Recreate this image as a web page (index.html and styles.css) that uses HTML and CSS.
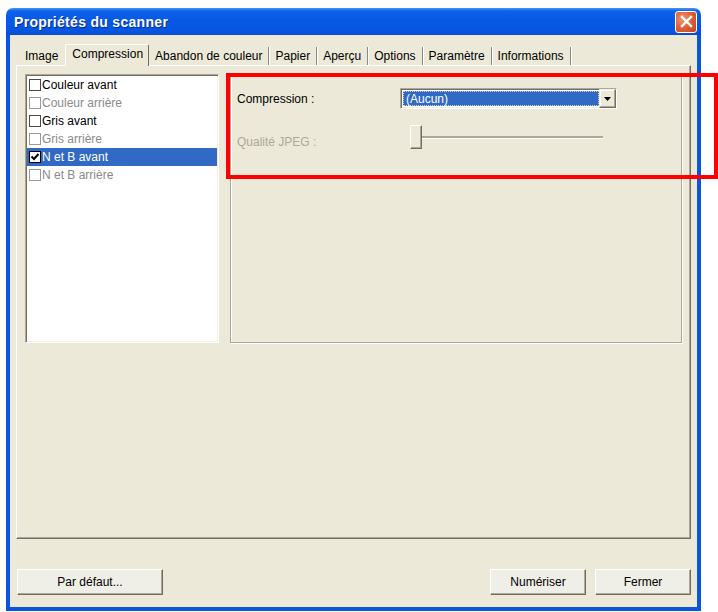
FILE: index.html
```html
<!DOCTYPE html>
<html lang="fr">
<head>
    <meta charset="UTF-8">
    <meta name="viewport" content="width=device-width, initial-scale=1.0">
    <title>Propriétés du scanner</title>
    <link rel="stylesheet" href="styles.css">
</head>
<body>
    <div class="fenetre">
        <div class="titre">
            <span class="titre-texte">Propriétés du scanner</span>
            <button class="fermer-x" title="Fermer">
                <svg width="13" height="13" viewBox="0 0 13 13"><path d="M2 2 L11 11 M11 2 L2 11" stroke="#fff" stroke-width="2.4" stroke-linecap="square"/></svg>
            </button>
        </div>
        <div class="client">
            <div class="onglets">
                <div class="onglet premier">Image</div>
                <div class="onglet actif">Compression</div>
                <div class="onglet">Abandon de couleur</div>
                <div class="onglet">Papier</div>
                <div class="onglet">Aperçu</div>
                <div class="onglet">Options</div>
                <div class="onglet">Paramètre</div>
                <div class="onglet">Informations</div>
            </div>
            <div class="page">
                <ul class="liste">
                    <li><span class="case"></span>Couleur avant</li>
                    <li class="grise"><span class="case"></span>Couleur arrière</li>
                    <li><span class="case"></span>Gris avant</li>
                    <li class="grise"><span class="case"></span>Gris arrière</li>
                    <li class="choisi"><span class="case cochee"><svg width="10" height="10" viewBox="0 0 10 10"><path d="M1.5 4.5 L4 7 L8.5 2" fill="none" stroke="#000" stroke-width="2"/></svg></span>N et B avant</li>
                    <li class="grise"><span class="case"></span>N et B arrière</li>
                </ul>
                <div class="cadre">
                    <div class="ligne">
                        <label>Compression :</label>
                        <div class="combo">
                            <div class="combo-valeur"><span>(Aucun)</span></div>
                            <div class="combo-bouton">
                                <svg width="7" height="4" viewBox="0 0 7 4"><path d="M0 0 H7 L3.5 4 Z" fill="#000"/></svg>
                            </div>
                        </div>
                    </div>
                    <div class="ligne ligne-curseur">
                        <label class="inactif">Qualité JPEG :</label>
                        <div class="curseur">
                            <div class="poignee"></div>
                            <div class="rail"></div>
                        </div>
                    </div>
                </div>
            </div>
            <div class="boutons">
                <button class="bouton large">Par défaut...</button>
                <span class="vide"></span>
                <button class="bouton">Numériser</button>
                <button class="bouton">Fermer</button>
            </div>
        </div>
    </div>
    <div class="repere"></div>
</body>
</html>
```

FILE: styles.css
```css
body { margin: 0; background: #fff; font-family: "Liberation Sans", Arial, sans-serif; font-size: 12px; color: #000; }

.fenetre { width: 695px; margin: 8px 0 0 6px; }
.titre { height: 27px; display: flex; align-items: center; justify-content: space-between; padding: 0 4px 0 8px; border-radius: 7px 7px 0 0; background: linear-gradient(to bottom, #4a97f8 0, #0d62ea 3px, #0759e5 45%, #0655e0 85%, #0a4cd2 100%); }
.titre-texte { color: #fff; font-weight: bold; font-size: 14px; letter-spacing: 0.3px; text-shadow: 1px 1px 0 #0a2a8a; }
.fermer-x { width: 22px; height: 22px; padding: 0; border: 1px solid #fff; border-radius: 3px; background: radial-gradient(circle at 35% 35%, #f29a78 0, #e2633a 45%, #c8401a 100%); display: flex; align-items: center; justify-content: center; }

.client { background: #ece9d8; border: 4px solid #0a55e0; border-top: 0; padding: 9px 6px 12px; }

.onglets { display: flex; align-items: flex-end; height: 22px; padding-left: 2px; margin-bottom: -1px; position: relative; z-index: 1; }
.onglet { height: 18px; line-height: 18px; margin-bottom: 1px; padding: 0 6px; border-right: 1px solid #8c8a80; box-shadow: 1px 0 0 #fff; white-space: nowrap; }
.onglet.premier { padding: 0 7px; border-right: 0; box-shadow: none; }
.onglet.actif { height: 21px; line-height: 18px; margin-bottom: 0; padding: 0 5px 0 6px; background: #ece9d8; border-top: 1px solid #fff; border-left: 1px solid #fff; border-right: 1px solid #716f64; border-radius: 2px 2px 0 0; box-shadow: none; }

.page { height: 474px; box-sizing: border-box; border: 1px solid; border-color: #fff #716f64 #716f64 #fff; box-shadow: inset -1px -1px 0 #aca899; padding: 8px; display: flex; gap: 11px; align-items: flex-start; }

.liste { list-style: none; margin: 0; padding: 0 1px 0 0; width: 194px; height: 269px; box-sizing: border-box; background: #fff; border: 1px solid; border-color: #aca899 #fff #fff #aca899; box-shadow: inset 1px 1px 0 #716f64, inset -1px -1px 0 #f1efe2; padding: 1px; }
.liste li { height: 18px; display: flex; align-items: center; padding-left: 2px; white-space: nowrap; }
.liste li.grise { color: #8a8a8a; }
.liste li.choisi { background: #316ac5; color: #fff; }
.case { width: 12px; height: 12px; box-sizing: border-box; border: 1px solid #4a4a4a; background: #fff; margin-right: 1px; display: flex; align-items: center; justify-content: center; }
.grise .case { border-color: #9a9a9a; }
.case.cochee { border-color: #000; }

.cadre { width: 452px; height: 269px; box-sizing: border-box; border: 1px solid #aca899; box-shadow: inset 1px 1px 0 #fff, 1px 1px 0 #fff; padding: 13px 6px; display: grid; grid-template-columns: 163px 217px; row-gap: 15px; align-content: start; }
.ligne { display: contents; }
.ligne label { display: flex; align-items: center; height: 21px; }
.ligne-curseur label { height: 14px; margin-top: 11px; }
.inactif { color: #aca899; }

.combo { height: 21px; box-sizing: border-box; display: flex; border: 1px solid; border-color: #aca899 #fff #fff #aca899; box-shadow: inset 1px 1px 0 #716f64, inset -1px -1px 0 #f1efe2; padding: 2px 2px 2px 2px; background: #fff; }
.combo-valeur { flex: 1; background: #316ac5; border: 1px dotted #d8d2b8; color: #fff; display: flex; align-items: center; padding-left: 2px; }
.combo-bouton { width: 17px; margin: -2px -2px -2px 0; box-sizing: border-box; background: #ece9d8; border: 1px solid; border-color: #f1efe2 #716f64 #716f64 #f1efe2; box-shadow: inset -1px -1px 0 #aca899, inset 1px 1px 0 #fff; display: flex; align-items: center; justify-content: center; }

.curseur { display: flex; align-items: center; height: 26px; padding-left: 10px; }
.poignee { width: 12px; height: 24px; box-sizing: border-box; background: #ece9d8; border: 1px solid; border-color: #fff #716f64 #716f64 #fff; box-shadow: inset -1px -1px 0 #aca899; }
.rail { width: 181px; height: 3px; box-sizing: border-box; border-top: 2px solid #aca899; border-bottom: 1px solid #fff; }

.boutons { display: flex; gap: 9px; margin-top: 30px; padding-left: 1px; }
.vide { flex: 1; }
.bouton { width: 96px; height: 26px; box-sizing: border-box; font-family: "Liberation Sans", Arial, sans-serif; font-size: 12px; color: #000; background: #f0efe7; border: 1px solid; border-color: #fff #716f64 #716f64 #fff; box-shadow: inset -1px -1px 0 #aca899; padding: 0; }
.bouton.large { width: 146px; }

.repere { position: absolute; left: 226px; top: 73px; width: 492px; height: 106px; box-sizing: border-box; border: 4px solid #f00; }
```
